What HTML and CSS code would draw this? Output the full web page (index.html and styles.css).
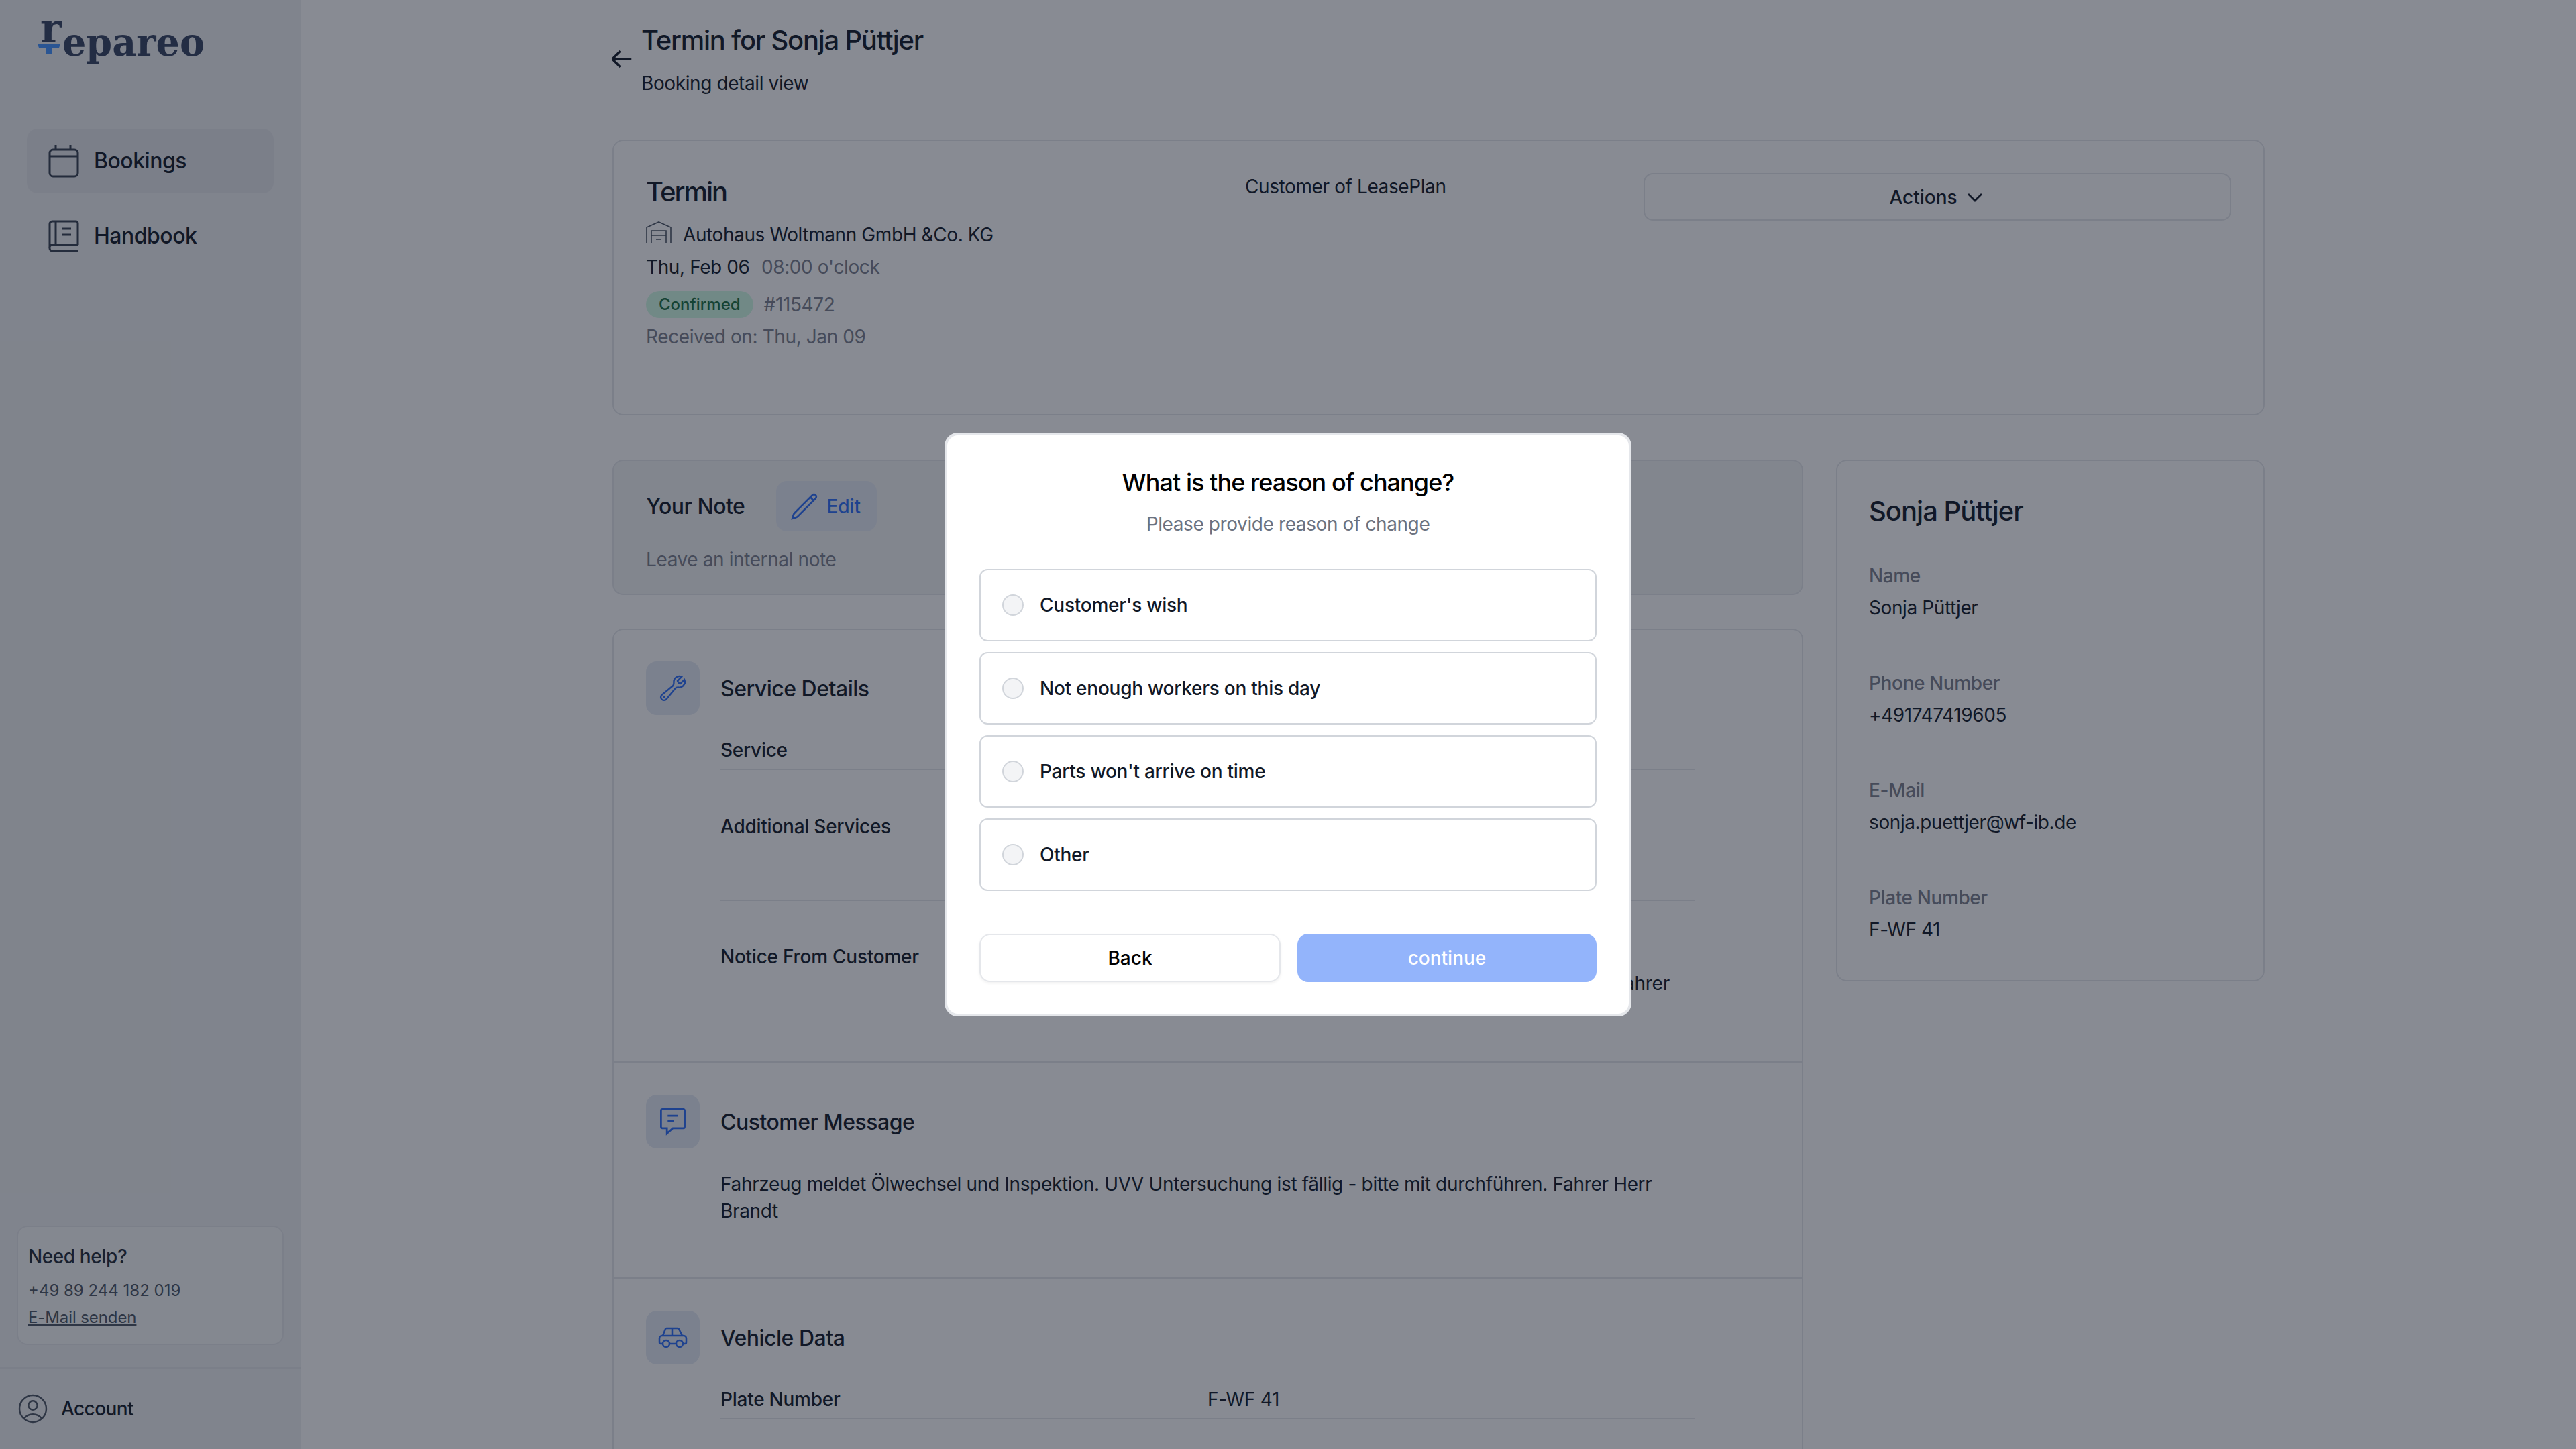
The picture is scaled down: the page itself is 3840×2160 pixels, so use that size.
FILE: index.html
```html
<!DOCTYPE html>
<html>
<head>
    <title>Termin for Sonja Püttjer</title>
    <link rel="stylesheet" href="styles.css">
</head>
<body>
    <aside class="sidebar">
        <svg class="logo" viewBox="0 0 256 72" width="256" height="72">
            <text class="logo-text" x="4" y="35" font-size="60">r</text>
            <text class="logo-text" x="37" y="55" font-size="58" textLength="212" lengthAdjust="spacingAndGlyphs">epareo</text>
            <path class="logo-mark" d="M0 38h34l-2 5H21v10h-9V43H2z"/>
        </svg>

        <nav class="nav">
            <a class="nav-item active">
                <svg class="nav-icon" viewBox="0 0 48 48"><rect x="2" y="7" width="42" height="40" rx="5"/><path d="M11 0v7M33 0v7M2 17h42"/></svg>
                Bookings
            </a>
            <a class="nav-item">
                <svg class="nav-icon" viewBox="0 0 48 48"><path d="M44 37V5a3 3 0 0 0-3-3H6a4 4 0 0 0-4 4v36a4 4 0 0 0 4 4h38M2 42a4 4 0 0 1 4-5h38M11 2v35M20 13h14M20 22h14"/></svg>
                Handbook
            </a>
        </nav>

        <div class="help">
            <div class="help-title">Need help?</div>
            <div class="help-line">+49 89 244 182 019</div>
            <a class="help-line help-link">E-Mail senden</a>
        </div>

        <div class="account">
            <svg class="account-icon" viewBox="3 3 18 18"><path d="M17.982 18.725A7.488 7.488 0 0 0 12 15.75a7.488 7.488 0 0 0-5.982 2.975m11.963 0a9 9 0 1 0-11.963 0m11.963 0A8.966 8.966 0 0 1 12 21a8.966 8.966 0 0 1-5.982-2.275M15 9.75a3 3 0 1 1-6 0 3 3 0 0 1 6 0Z"/></svg>
            Account
        </div>
    </aside>

    <main class="main">
        <header class="page-head">
            <svg class="back-icon" viewBox="0 0 24 24"><path d="M10.5 19.5 3 12m0 0 7.5-7.5M3 12h18"/></svg>
            <div>
                <h1 class="page-title">Termin for Sonja Püttjer</h1>
                <p class="page-sub">Booking detail view</p>
            </div>
        </header>

        <section class="card booking">
            <div>
                <h2 class="booking-title">Termin</h2>
                <div class="booking-garage">
                    <svg class="garage-icon" viewBox="0 0 38 32"><path d="M1 32V9L19 1l18 8v23M8 32V14h22v18M8 21h22M15 27h8"/></svg>
                    Autohaus Woltmann GmbH &amp;Co. KG
                </div>
                <div class="booking-date">Thu, Feb 06 <span class="muted date-time">08:00 o'clock</span></div>
                <div class="booking-status">
                    <span class="badge">Confirmed</span>
                    <span class="muted">#115472</span>
                </div>
                <div class="booking-received muted">Received on: Thu, Jan 09</div>
            </div>
            <div class="text">Customer of LeasePlan</div>
            <button class="actions">
                Actions
                <svg class="chevron" viewBox="0 0 24 24"><path d="m19.5 8.25-7.5 7.5-7.5-7.5"/></svg>
            </button>
        </section>

        <div class="columns">
            <div>
                <section class="card note">
                    <div class="note-head">
                        <h3 class="section-title">Your Note</h3>
                        <button class="edit">
                            <svg class="pencil" viewBox="0 0 24 24"><path d="m16.862 4.487 1.687-1.688a1.875 1.875 0 1 1 2.652 2.652L6.832 19.82a4.5 4.5 0 0 1-1.897 1.13l-2.685.8.8-2.685a4.5 4.5 0 0 1 1.13-1.897L16.863 4.487Zm0 0L19.5 7.125"/></svg>
                            Edit
                        </button>
                    </div>
                    <p class="note-text muted">Leave an internal note</p>
                </section>

                <section class="card details">
                    <div class="block block-service">
                        <div class="block-head">
                            <div class="icon-box">
                                <svg class="box-icon" viewBox="0 0 24 24"><path d="M21.75 6.75a4.5 4.5 0 0 1-4.884 4.484c-1.076-.091-2.264.071-2.95.904l-7.152 8.684a2.548 2.548 0 1 1-3.586-3.586l8.684-7.152c.833-.686.995-1.874.904-2.95a4.5 4.5 0 0 1 6.336-4.486l-3.276 3.276a3.004 3.004 0 0 0 2.25 2.25l3.276-3.276c.271.575.422 1.217.422 1.885Z"/><path d="M4.867 19.125h.008v.008h-.008v-.008Z"/></svg>
                            </div>
                            <h3 class="section-title">Service Details</h3>
                        </div>
                        <div class="row row-first"><span class="row-label">Service</span></div>
                        <div class="row row-tall"><span class="row-label">Additional Services</span></div>
                        <div class="row row-plain">
                            <span class="row-label">Notice From Customer</span>
                            <span class="row-note">Fahrer</span>
                        </div>
                    </div>

                    <div class="block block-message">
                        <div class="block-head">
                            <div class="icon-box">
                                <svg class="box-icon chat" viewBox="0 0 40 40"><path d="M6 3h28a2 2 0 0 1 2 2v22a2 2 0 0 1-2 2H20l-8 7v-7H6a2 2 0 0 1-2-2V5a2 2 0 0 1 2-2zM13 12h14M13 19h8"/></svg>
                            </div>
                            <h3 class="section-title">Customer Message</h3>
                        </div>
                        <p class="message">Fahrzeug meldet Ölwechsel und Inspektion. UVV Untersuchung ist fällig - bitte mit durchführen. Fahrer Herr Brandt</p>
                    </div>

                    <div class="block">
                        <div class="block-head">
                            <div class="icon-box">
                                <svg class="box-icon car" viewBox="0 0 44 32"><path d="M7 25H4a2 2 0 0 1-2-2v-6a4 4 0 0 1 4-4h32a4 4 0 0 1 4 4v6a2 2 0 0 1-2 2h-3M17 25h10M7 13l4-10a2 2 0 0 1 2-1h16a2 2 0 0 1 2 1l5 10M21 2v11"/><circle cx="12" cy="25" r="5"/><circle cx="32" cy="25" r="5"/></svg>
                            </div>
                            <h3 class="section-title">Vehicle Data</h3>
                        </div>
                        <div class="row row-first">
                            <span class="row-label">Plate Number</span>
                            <span class="text">F-WF 41</span>
                        </div>
                    </div>
                </section>
            </div>

            <section class="card customer">
                <h2 class="customer-name">Sonja Püttjer</h2>
                <div class="field"><div class="field-label">Name</div><div class="field-value">Sonja Püttjer</div></div>
                <div class="field"><div class="field-label">Phone Number</div><div class="field-value">+491747419605</div></div>
                <div class="field"><div class="field-label">E-Mail</div><div class="field-value">sonja.puettjer@wf-ib.de</div></div>
                <div class="field"><div class="field-label">Plate Number</div><div class="field-value">F-WF 41</div></div>
            </section>
        </div>
    </main>

    <div class="overlay">
        <div class="modal">
            <h2 class="modal-title">What is the reason of change?</h2>
            <p class="modal-sub">Please provide reason of change</p>

            <div class="options">
                <label class="option"><span class="radio"></span>Customer's wish</label>
                <label class="option"><span class="radio"></span>Not enough workers on this day</label>
                <label class="option"><span class="radio"></span>Parts won't arrive on time</label>
                <label class="option"><span class="radio"></span>Other</label>
            </div>

            <div class="modal-buttons">
                <button class="btn btn-back">Back</button>
                <button class="btn btn-continue">continue</button>
            </div>
        </div>
    </div>
</body>
</html>
```
FILE: styles.css
```css
* {
    box-sizing: border-box;
}

html, body {
    height: 100%;
}

body {
    margin: 0;
    display: flex;
    overflow: hidden;
    position: relative;
    background: #fff;
    color: #111827;
    font-family: Inter, "Liberation Sans", sans-serif;
    font-size: 28px;
    line-height: 40px;
    letter-spacing: -0.4px;
}

h1, h2, h3, p {
    margin: 0;
    font-weight: 500;
}

p {
    font-weight: 400;
}

svg {
    fill: none;
    flex-shrink: 0;
}

.muted {
    color: #7a7f8c;
}

/* sidebar */
.sidebar {
    width: 448px;
    flex-shrink: 0;
    display: flex;
    flex-direction: column;
    background: #eff0f2;
}

.logo {
    margin: 28px 0 0 56px;
    overflow: visible;
}

.logo-text {
    font-family: "DejaVu Serif", serif;
    font-weight: 700;
    letter-spacing: 0;
    fill: #354261;
}

.logo-mark {
    fill: #4392ff;
}

.nav {
    display: flex;
    flex-direction: column;
    gap: 16px;
    margin: 92px 40px 0;
}

.nav-item {
    height: 96px;
    display: flex;
    align-items: center;
    gap: 20px;
    padding-left: 32px;
    border-radius: 16px;
    font-size: 32px;
    font-weight: 500;
    letter-spacing: -0.5px;
    line-height: 44px;
}

.nav-icon {
    width: 48px;
    height: 48px;
    stroke: #374151;
    stroke-width: 3;
    overflow: visible;
}

.nav-item.active {
    background: #e5e7eb;
}

.help {
    margin: auto 25px 0;
    height: 178px;
    padding: 20px 15px;
    border: 2px solid #e5e7eb;
    border-radius: 16px;
    background: #f7f8f9;
}

.help-title {
    font-weight: 500;
    line-height: 48px;
    color: #1f2937;
}

.help-line {
    display: block;
    font-size: 24px;
    letter-spacing: 0;
    color: #4b5563;
}

.help-title + .help-line {
    margin-top: 7px;
}

.help-link {
    letter-spacing: -0.1px;
    text-decoration: underline;
}

.account {
    display: flex;
    align-items: center;
    gap: 22px;
    height: 122px;
    margin-top: 33px;
    padding-left: 29px;
    border-top: 2px solid #e5e7eb;
    font-weight: 500;
    letter-spacing: -0.6px;
}

.account-icon {
    width: 40px;
    height: 40px;
    stroke: #4b5563;
    stroke-width: 1.1;
    overflow: visible;
}

/* main column */
.main {
    flex: 1;
    height: 100%;
    overflow: hidden;
    padding: 32px 464px 0 465px;
    min-width: 0;
}

.page-head {
    display: flex;
    height: 112px;
}

.back-icon {
    width: 38px;
    height: 38px;
    margin: 37px 10px 0 -5px;
    stroke: #111827;
    stroke-width: 2.2;
}

.page-title {
    font-size: 40px;
    line-height: 56px;
    letter-spacing: -1.25px;
}

.page-sub {
    margin-top: 16px;
}

.card {
    border: 2px solid #e5e7eb;
    border-radius: 16px;
}

.booking {
    display: grid;
    grid-template-columns: 893px 594px 876px;
    height: 411px;
    margin-top: 64px;
    padding: 48px;
}

.booking-title {
    font-size: 40px;
    line-height: 56px;
    letter-spacing: -2px;
}

.booking-garage {
    display: flex;
    align-items: center;
    gap: 17px;
    margin-top: 16px;
}

.garage-icon {
    width: 38px;
    height: 32px;
    margin-top: -8px;
    stroke: #4b5563;
    stroke-width: 1.6;
}

.booking-date {
    margin-top: 8px;
}

.date-time {
    margin-left: 10px;
}

.booking-status {
    display: flex;
    align-items: center;
    gap: 16px;
    margin-top: 16px;
}

.badge {
    height: 40px;
    padding: 0 19px;
    border-radius: 20px;
    background: #d1fae5;
    color: #1a6e40;
    font-size: 24px;
    font-weight: 500;
    letter-spacing: 0;
}

.booking-received {
    margin-top: 8px;
}

.actions {
    height: 71px;
    display: flex;
    align-items: center;
    justify-content: center;
    gap: 10px;
    padding: 0;
    border: 2px solid #e5e7eb;
    border-radius: 14px;
    background: #fff;
    color: #111827;
    font: 500 28px Inter, sans-serif;
}

.chevron {
    width: 32px;
    height: 32px;
    stroke: #111827;
    stroke-width: 2;
}

.columns {
    display: grid;
    grid-template-columns: 1775px 639px;
    gap: 49px;
    margin-top: 66px;
    align-items: start;
}

.note {
    height: 202px;
    padding: 30px 48px;
    background: #f3f4f5;
}

.note-head {
    display: flex;
    align-items: center;
    gap: 47px;
}

.section-title {
    font-size: 32px;
    line-height: 48px;
    letter-spacing: -0.5px;
}

.block-head .section-title {
    padding-top: 2px;
}

.edit {
    height: 75px;
    display: flex;
    align-items: center;
    gap: 11px;
    padding: 0 24px 0 20px;
    border: 0;
    border-radius: 16px;
    background: #e4eaf4;
    color: #2b6cf6;
    font: 500 28px Inter, sans-serif;
}

.pencil {
    width: 44px;
    height: 44px;
    stroke: #2b6cf6;
    stroke-width: 1.4;
}

.note-text {
    margin-top: 22px;
}

.details {
    margin-top: 50px;
    height: 1400px;
}

.block {
    padding: 47px 48px 0;
}

.block + .block {
    padding-top: 48px;
    border-top: 2px solid #e5e7eb;
}

.block-service {
    height: 643px;
}

.block-message {
    height: 322px;
}

.block-head {
    display: flex;
    align-items: center;
    gap: 31px;
}

.icon-box {
    width: 80px;
    height: 80px;
    display: flex;
    align-items: center;
    justify-content: center;
    border-radius: 16px;
    background: #e4eaf4;
}

.box-icon {
    width: 44px;
    height: 44px;
    stroke: #2b6cf6;
    stroke-width: 1.3;
}

.box-icon.chat {
    stroke-width: 2.5;
}

.box-icon.car {
    height: 32px;
    stroke-width: 2.5;
}

.row {
    display: grid;
    grid-template-columns: 726px 1fr;
    width: 1452px;
    margin-left: 111px;
    padding-bottom: 8px;
    border-bottom: 2px solid #e5e7eb;
    font-weight: 500;
    letter-spacing: -0.25px;
}

.row .text {
    font-weight: 400;
}

.row-first {
    margin-top: 32px;
}

.row-tall {
    margin-top: 64px;
    height: 131px;
}

.row-plain {
    margin-top: 63px;
    border-bottom: 0;
}

.row-note {
    width: 689px;
    padding-top: 40px;
    text-align: right;
    font-weight: 400;
}

.message {
    width: 1452px;
    margin: 33px 0 0 111px;
    letter-spacing: -0.33px;
}

.customer {
    height: 778px;
    padding: 47px 47px 0;
}

.customer-name {
    font-size: 40px;
    line-height: 56px;
    letter-spacing: -1px;
    margin-bottom: 48px;
}

.field {
    margin-bottom: 72px;
}

.field-label {
    color: #7a7f8c;
    font-weight: 500;
    margin-bottom: 8px;
}

/* modal */
.overlay {
    position: absolute;
    inset: 0;
    display: flex;
    align-items: center;
    justify-content: center;
    background: rgba(17, 24, 39, 0.5);
}

.modal {
    width: 1024px;
    height: 870px;
    padding: 42px 48px 0;
    border: 4px solid #e5e7eb;
    border-radius: 20px;
    background: #fff;
    text-align: center;
}

.modal-title {
    color: #000;
    font-size: 36px;
    line-height: 56px;
    letter-spacing: -0.95px;
}

.modal-sub {
    margin-top: 14px;
    color: #6b7280;
}

.options {
    display: flex;
    flex-direction: column;
    gap: 16px;
    margin-top: 47px;
}

.option {
    height: 108px;
    display: flex;
    align-items: center;
    gap: 24px;
    padding-left: 32px;
    border: 2px solid #d1d5db;
    border-radius: 12px;
    font-weight: 500;
    letter-spacing: -0.25px;
}

.radio {
    width: 32px;
    height: 32px;
    border: 2px solid #d1d5db;
    border-radius: 50%;
    background: #f3f4f6;
}

.modal-buttons {
    display: grid;
    grid-template-columns: 449px 446px;
    gap: 25px;
    margin-top: 64px;
}

.btn {
    height: 72px;
    border-radius: 16px;
    font: 500 28px Inter, sans-serif;
}

.btn-back {
    border: 2px solid #e5e7eb;
    background: #fff;
    color: #000;
    box-shadow: 0 2px 4px rgba(0, 0, 0, 0.06);
}

.btn-continue {
    border: 0;
    background: #93b4fb;
    color: #fff;
}
```
